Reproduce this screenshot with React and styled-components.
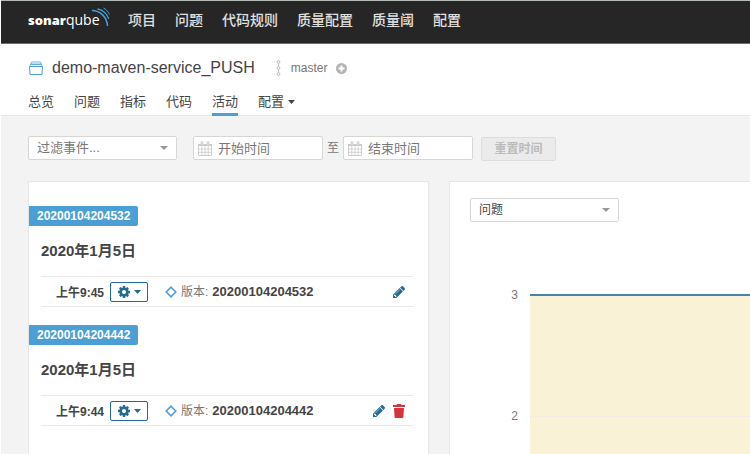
import React from "react";
import styled, { createGlobalStyle } from "styled-components";

const GlobalStyle = createGlobalStyle`
  * { box-sizing: border-box; }
  body {
    margin: 0;
    background: #fff;
    color: #444;
    font: 13px/20px "Liberation Sans", "Noto Sans CJK SC", sans-serif;
  }
  button, input, select { font: inherit; color: inherit; margin: 0; }
  a { color: inherit; text-decoration: none; }
  svg { display: block; flex: none; }
`;

const Page = styled.div`
  display: flex;
  flex-direction: column;
  min-height: 100vh;
  padding-left: 1px;
`;

const TopBar = styled.header`
  display: flex;
  align-items: center;
  height: 44px;
  padding: 0 27px 4px;
  background: #262626;
  border-top: 1px solid #b4bab5;
  border-bottom: 1px solid #6c6c6c;
`;

const Logo = styled.a`
  display: flex;
  align-items: center;
  width: 82px;
  height: 38px;
  margin-right: 18px;
  position: relative;
  color: #fff;
  font: 400 14px/20px "Open Sans", sans-serif;
`;

const LogoStrong = styled.strong`
  font-size: 13px;
  font-weight: 800;
`;

const LogoWaves = styled.svg`
  position: absolute;
  right: 0;
  top: 6px;
`;

const MainNav = styled.nav`
  display: flex;
  gap: 19px;
  color: #e0e0e0;
  font-size: 14px;
  font-weight: 500;
`;

const ProjectHeader = styled.section`
  padding: 14px 27px 0;
  border-bottom: 1px solid #e6e6e6;
  height: 72px;
`;

const TitleRow = styled.div`
  display: flex;
  align-items: center;
  height: 20px;
`;

const Title = styled.h1`
  margin: 0 21px 0 8px;
  font-size: 16px;
  font-weight: 400;
  line-height: 20px;
`;

const Branch = styled.span`
  margin: 0 9px 0 10px;
  font-size: 12px;
  color: #777;
`;

const Tabs = styled.nav`
  display: flex;
  gap: 20px;
  margin-top: 13px;
`;

const Tab = styled.a`
  display: flex;
  align-items: center;
  gap: 4px;
  height: 25px;
  border-bottom: 3px solid ${(p) => (p.$active ? "#4b9fd5" : "transparent")};
`;

const Content = styled.main`
  flex: 1;
  display: flex;
  flex-direction: column;
  padding: 20px 0 0 27px;
  background: #f3f3f3;
`;

const Filters = styled.form`
  display: flex;
  align-items: center;
  height: 24px;
  margin-bottom: 21px;
  color: #777;
`;

const SelectBox = styled.div`
  display: grid;
  align-items: center;
  width: 149px;
  height: 24px;
  font-size: ${(p) => p.$size || 13}px;
  color: ${(p) => p.$color || "#777"};
  & > * { grid-area: 1 / 1; }
  & > svg { justify-self: end; margin-right: 9px; pointer-events: none; }
`;

const Select = styled.select`
  width: 100%;
  height: 24px;
  padding: 0 24px 0 8px;
  appearance: none;
  background: #fff;
  border: 1px solid #d6d6d6;
  border-radius: 2px;
`;

const DateBox = styled.label`
  display: flex;
  align-items: center;
  gap: 6px;
  width: 130px;
  height: 24px;
  padding-left: 4px;
  background: #fff;
  border: 1px solid #d6d6d6;
  border-radius: 2px;
`;

const DateInput = styled.input`
  flex: 1;
  min-width: 0;
  height: 22px;
  padding: 0;
  border: 0;
  background: transparent;
  &::placeholder { color: #777; opacity: 1; }
`;

const ResetButton = styled.button`
  width: 75px;
  height: 24px;
  margin: 2px 0 0 8px;
  padding: 0;
  background: #ebebeb;
  border: 1px solid #ddd;
  border-radius: 2px;
  font-size: 12px;
  font-weight: 700;
  color: #bbb !important;
`;

const Between = styled.span`
  padding: 0 4px;
  font-size: 12px;
`;

const Columns = styled.div`
  flex: 1;
  display: grid;
  grid-template-columns: 401px minmax(0, 1fr);
  gap: 20px;
`;

const Gap = styled.span`
  width: 16px;
`;

const Panel = styled.section`
  background: #fff;
  border: 1px solid #e6e6e6;
  border-width: 1px 0 0 1px;
`;

const ListPanel = styled(Panel)`
  padding: 24px 0 0;
  border-right-width: 1px;
`;

const GraphPanel = styled(Panel)`
  display: flex;
  flex-direction: column;
  padding: 16px 0 0 20px;
`;

const VersionGroup = styled.article`
  padding-bottom: 18px;
`;

const VersionTag = styled.h2`
  width: max-content;
  margin: 0;
  padding: 0 8px;
  background: #4b9fd5;
  border-radius: 0 2px 2px 0;
  color: #fff;
  font-size: 12px;
  line-height: 20px;
`;

const Day = styled.h3`
  margin: 15px 12px;
  font-size: 15px;
  line-height: 20px;
`;

const Analysis = styled.div`
  display: flex;
  align-items: center;
  height: 31px;
  margin: 0 15px 0 12px;
  padding: 0 8px 0 15px;
  border: 1px solid #e9e9e9;
  border-width: 1px 0;
`;

const Time = styled.time`
  width: 54px;
  font-size: 12px;
  font-weight: 700;
  padding-top: 2px;
`;

const GearButton = styled.button`
  display: flex;
  align-items: center;
  justify-content: center;
  gap: 4px;
  width: 38px;
  height: 20px;
  margin-right: 17px;
  padding: 0;
  background: #fff;
  border: 1px solid #236a97;
  border-radius: 2px;
  color: #236a97;
`;

const EventName = styled.span`
  display: flex;
  gap: 4px;
  flex: 1;
  margin-left: 4px;
  font-size: 12px;
  color: #777;
`;

const EventVersion = styled.strong`
  font-size: 13px;
  color: #444;
`;

const IconButton = styled.button`
  display: flex;
  padding: 0;
  margin-left: 8px;
  border: 0;
  background: none;
  color: ${(p) => p.$color};
`;

const Chart = styled.svg`
  width: 100%;
  flex: 1 1 232px;
`;

const Caret = ({ color = "#999", w = 8, h = 4 }) => (
  <svg width={w} height={h} viewBox="0 0 8 4" preserveAspectRatio="none" fill={color}>
    <path d="M0 0h8L4 4z" />
  </svg>
);

const ProjectIcon = () => (
  <svg width="16" height="14" viewBox="0 0 16 14" fill="none" stroke="#4b9fd5">
    <path d="M1.5 5.5h13l-.5 8H2z" fill="#fff" />
    <path d="M2.5 3.5h11l.5 2H2zM3.5 1h9l.6 2H2.9z" strokeOpacity=".75" />
  </svg>
);

const BranchIcon = () => (
  <svg width="5" height="16" viewBox="0 0 5 16" fill="none" stroke="#bbb">
    <circle cx="2.5" cy="2" r="1.4" />
    <circle cx="2.5" cy="8" r="1.4" />
    <circle cx="2.5" cy="14" r="1.4" />
    <path d="M2.5 3.5v3M2.5 9.5v3" />
  </svg>
);

const PlusIcon = () => (
  <svg width="11" height="11" viewBox="0 0 11 11">
    <circle cx="5.5" cy="5.5" r="5.5" fill="#b4b4b4" />
    <path d="M5.5 2.5v6M2.5 5.5h6" stroke="#fff" strokeWidth="2" />
  </svg>
);

const CalendarIcon = () => (
  <svg width="14" height="15" viewBox="0 0 14 15" fill="none" stroke="#ccc">
    <path d="M.5 3.5h13v11H.5z" />
    <path d="M.5 4h13" strokeWidth="2" />
    <path d="M3.8 5v9.500M7 5v9.500M10.200 5v9.500M.5 8h13M.5 11.300h13" strokeWidth=".8" />
    <path d="M4 .5v4M10 .5v4" strokeWidth="2.600" />
    <path d="M4 1.500v2.500M10 1.500v2.500" stroke="#eee" strokeWidth=".8" />
  </svg>
);

const GearIcon = () => (
  <svg width="12" height="12" viewBox="128 128 1536 1536" fill="currentColor">
    <path d="M1152 896q0-106-75-181t-181-75-181 75-75 181 75 181 181 75 181-75 75-181zm512-109v222q0 12-8 23t-20 13l-185 28q-19 54-39 91 35 50 107 138 10 12 10 25t-9 23q-27 37-99 108t-94 71q-12 0-26-9l-138-108q-44 23-91 38-16 136-29 186-7 28-36 28h-222q-14 0-24.500-8.500t-11.500-21.500l-28-184q-49-16-90-37l-141 107q-10 9-25 9-14 0-25-11-126-114-165-168-7-10-7-23 0-12 8-23 15-21 51-66.500t54-70.500q-27-50-41-99l-183-27q-13-2-21-12.500t-8-23.500v-222q0-12 8-23t19-13l186-28q14-46 39-92-40-57-107-138-10-12-10-24 0-10 9-23 26-36 98.500-107.500t94.500-71.500q13 0 26 10l138 107q44-23 91-38 16-136 29-186 7-28 36-28h222q14 0 24.500 8.500t11.500 21.500l28 184q49 16 90 37l142-107q9-9 24-9 13 0 25 10 129 119 165 170 7 8 7 22 0 12-8 23-15 21-51 66.500t-54 70.500q26 50 41 98l183 28q13 2 21 12.500t8 23.500z" />
  </svg>
);

const DiamondIcon = () => (
  <svg width="12" height="12" viewBox="0 0 12 12" fill="none" stroke="#4b9fd5" strokeWidth="1.600">
    <path d="M6 1.200L10.800 6 6 10.800 1.200 6z" />
  </svg>
);

const PencilIcon = () => (
  <svg width="12" height="12" viewBox="128 149 1515 1515" fill="currentColor">
    <path d="M491 1536l91-91-235-235-91 91v107h128v128h107zm523-928q0-22-22-22-10 0-17 7l-542 542q-7 7-7 17 0 22 22 22 10 0 17-7l542-542q7-7 7-17zm-54-192l416 416-832 832h-416v-416zm683 96q0 53-37 90l-166 166-416-416 166-165q36-38 90-38 53 0 91 38l235 234q37 39 37 91z" />
  </svg>
);

const TrashIcon = () => (
  <svg width="12" height="14" viewBox="0 0 12 14" fill="currentColor">
    <path d="M4 0h4l.5 1H12v2H0V1h3.500zM1 4h10l-.6 9q-.1 1-1 1H2.600q-.9 0-1-1z" />
  </svg>
);

const Dropdown = ({ id, label, value, size, color }) => (
  <SelectBox $size={size} $color={color}>
    <Select id={id} aria-label={label} defaultValue={value}>
      <option>{value}</option>
    </Select>
    <Caret />
  </SelectBox>
);

const DateField = ({ id, placeholder }) => (
  <DateBox htmlFor={id}>
    <CalendarIcon />
    <DateInput id={id} type="text" aria-label={placeholder} placeholder={placeholder} />
  </DateBox>
);

const NAV = ["项目", "问题", "代码规则", "质量配置", "质量阈", "配置"];
const TABS = ["总览", "问题", "指标", "代码", "活动"];
const VERSIONS = [
  { version: "20200104204532", day: "2020年1月5日", time: "上午9:45", removable: false },
  { version: "20200104204442", day: "2020年1月5日", time: "上午9:44", removable: true },
];

export default function App() {
  return (
    <Page>
      <GlobalStyle />
      <TopBar>
        <Logo href="#">
          <LogoStrong>sonar</LogoStrong>qube
          <LogoWaves width="19" height="20" viewBox="0 0 19 20" fill="none" stroke="#4b9fd5">
            <path d="M1 3.500C9 3.500 16 10 16.500 19" strokeWidth="1.500" />
            <path d="M6.500 1.800C12 3 16 7 17.800 12" strokeWidth="1.200" />
            <path d="M12.500 1C15 2.400 17 4.500 18.500 7.500" />
          </LogoWaves>
        </Logo>
        <MainNav>
          {NAV.map((n) => <a href="#" key={n}>{n}</a>)}
        </MainNav>
      </TopBar>

      <ProjectHeader>
        <TitleRow>
          <ProjectIcon />
          <Title>demo-maven-service_PUSH</Title>
          <BranchIcon />
          <Branch>master</Branch>
          <PlusIcon />
        </TitleRow>
        <Tabs>
          {TABS.map((t) => <Tab href="#" key={t} $active={t === "活动"}>{t}</Tab>)}
          <Tab href="#">配置<Caret color="#444" w={7} /></Tab>
        </Tabs>
      </ProjectHeader>

      <Content>
        <Filters>
          <Dropdown id="events" label="过滤事件" value="过滤事件..." />
          <Gap />
          <DateField id="from" placeholder="开始时间" />
          <Between>至</Between>
          <DateField id="to" placeholder="结束时间" />
          <ResetButton type="button" disabled>重置时间</ResetButton>
        </Filters>

        <Columns>
          <ListPanel>
            {VERSIONS.map((v) => (
              <VersionGroup key={v.version}>
                <VersionTag>{v.version}</VersionTag>
                <Day>{v.day}</Day>
                <Analysis>
                  <Time>{v.time}</Time>
                  <GearButton type="button" aria-label="设置">
                    <GearIcon />
                    <Caret color="#236a97" w={7} />
                  </GearButton>
                  <DiamondIcon />
                  <EventName>版本: <EventVersion>{v.version}</EventVersion></EventName>
                  <IconButton type="button" aria-label="编辑" $color="#236a97"><PencilIcon /></IconButton>
                  {v.removable && (
                    <IconButton type="button" aria-label="删除" $color="#d4333f"><TrashIcon /></IconButton>
                  )}
                </Analysis>
              </VersionGroup>
            ))}
          </ListPanel>

          <GraphPanel>
            <Dropdown id="graph" label="图表" value="问题" size={12} color="#444" />
            <Chart role="img" aria-label="问题">
              <rect x="60" y="73" width="100%" height="100%" fill="#faf2d7" />
              <rect x="60" y="194" width="100%" height="1" fill="#f2ece3" />
              <rect x="60" y="72" width="100%" height="2" fill="#4684ad" />
              <g fill="#777" fontSize="12" textAnchor="end">
                <text x="48" y="77">3</text>
                <text x="48" y="198">2</text>
              </g>
            </Chart>
          </GraphPanel>
        </Columns>
      </Content>
    </Page>
  );
}
